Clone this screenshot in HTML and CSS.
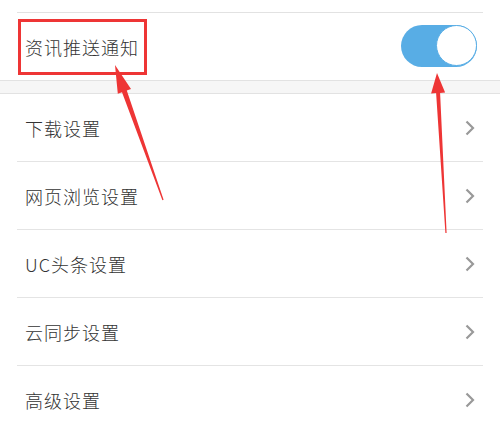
FILE: index.html
```html
<!DOCTYPE html>
<html lang="zh-CN">
<head>
<meta charset="utf-8">
<link rel="stylesheet" href="styles.css">
</head>
<body>
<div class="page">
  <div class="top-space"></div>
  <div class="notify-row">
    <span class="highlight"><span class="label">资讯推送通知</span></span>
    <span class="toggle"><span class="knob"></span></span>
  </div>
  <div class="band"></div>
  <ul class="list">
    <li class="row"><span class="label">下载设置</span><svg class="chev" width="10" height="16" viewBox="0 0 10 16"><path d="M1.5 1.5 L8 8 L1.5 14.5" fill="none" stroke="#999" stroke-width="2.2"/></svg></li>
    <li class="row"><span class="label">网页浏览设置</span><svg class="chev" width="10" height="16" viewBox="0 0 10 16"><path d="M1.5 1.5 L8 8 L1.5 14.5" fill="none" stroke="#999" stroke-width="2.2"/></svg></li>
    <li class="row"><span class="label">UC头条设置</span><svg class="chev" width="10" height="16" viewBox="0 0 10 16"><path d="M1.5 1.5 L8 8 L1.5 14.5" fill="none" stroke="#999" stroke-width="2.2"/></svg></li>
    <li class="row"><span class="label">云同步设置</span><svg class="chev" width="10" height="16" viewBox="0 0 10 16"><path d="M1.5 1.5 L8 8 L1.5 14.5" fill="none" stroke="#999" stroke-width="2.2"/></svg></li>
    <li class="row"><span class="label">高级设置</span><svg class="chev" width="10" height="16" viewBox="0 0 10 16"><path d="M1.5 1.5 L8 8 L1.5 14.5" fill="none" stroke="#999" stroke-width="2.2"/></svg></li>
  </ul>
  <svg class="arrows" width="500" height="428" viewBox="0 0 500 428">
    <polygon fill="#ee3535" points="115,65 131,89.1 126.8,90.6 163.6,199.8 162.4,200.2 122,92.2 117.8,93.7"/>
    <polygon fill="#ee3535" points="437,73 445.1,92.6 440.1,92.9 446.6,233 445.4,233 436.1,93.1 431.1,93.4"/>
  </svg>
</div>
</body>
</html>
```
FILE: styles.css
```css
html, body {
  margin: 0;
  padding: 0;
  background: #ffffff;
}
.page {
  position: relative;
  width: 500px;
  height: 428px;
  overflow: hidden;
  font-family: "Noto Sans CJK SC", "Noto Sans", sans-serif;
  color: #333333;
}
.top-space {
  height: 12px;
  margin: 0 17px;
  border-bottom: 1px solid #e2e2e2;
}
.notify-row {
  height: 67px;
  display: flex;
  align-items: center;
  padding-left: 18px;
  padding-right: 23px;
}
.highlight {
  display: flex;
  align-items: center;
  width: 119px;
  height: 50px;
  border: 3px solid #ee3535;
  padding-left: 4px;
}
.label {
  font-size: 18px;
  font-weight: 300;
  letter-spacing: 1px;
  line-height: 1;
  white-space: nowrap;
}
.toggle {
  margin-left: auto;
  width: 76px;
  height: 42px;
  border-radius: 21px;
  background: #58ade5;
  display: flex;
  justify-content: flex-end;
  align-items: center;
  box-sizing: border-box;
  margin-top: -2px;
}
.knob {
  width: 41px;
  height: 41px;
  border-radius: 50%;
  background: #ffffff;
  box-sizing: border-box;
  border: 1.5px solid #58ade5;
}
.band {
  height: 12px;
  background: #f6f6f6;
  border-top: 1px solid #e2e2e2;
  border-bottom: 1px solid #e2e2e2;
}
.list {
  list-style: none;
  margin: 0;
  padding: 0;
}
.row {
  height: 67px;
  margin: 0 17px;
  padding: 0 8px;
  display: flex;
  align-items: center;
  justify-content: space-between;
  border-bottom: 1px solid #e4e4e4;
}
.chev {
  display: block;
}
.arrows {
  position: absolute;
  left: 0;
  top: 0;
  pointer-events: none;
}
```
